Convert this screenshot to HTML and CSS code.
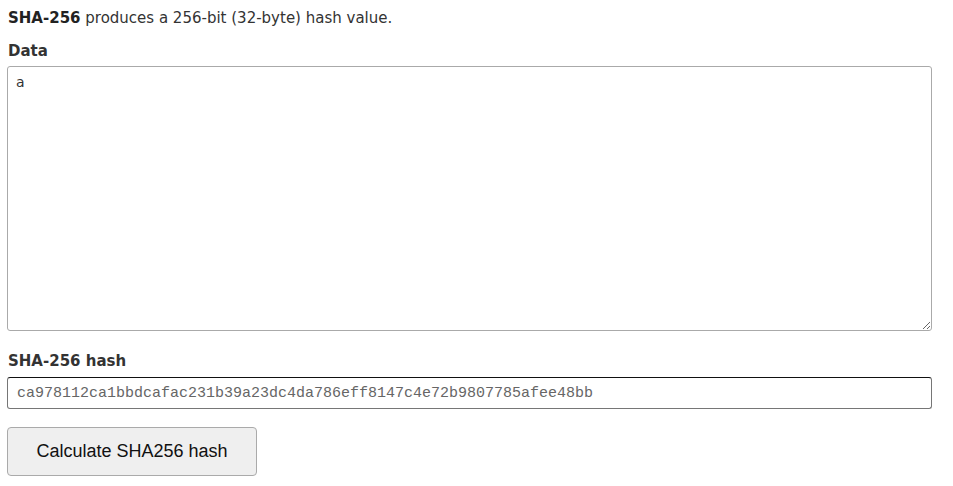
FILE: index.html
```html
<!DOCTYPE html>
<html>
<head>
<meta charset="utf-8">
<link rel="stylesheet" href="styles.css">
</head>
<body>
<div class="page">
  <p class="intro"><b>SHA-256</b> produces a 256-bit (32-byte) hash value.</p>
  <label class="lbl" for="data">Data</label>
  <textarea id="data" class="data">a</textarea>
  <label class="lbl lbl-hash" for="hash">SHA-256 hash</label>
  <input id="hash" class="hash" type="text" value="ca978112ca1bbdcafac231b39a23dc4da786eff8147c4e72b9807785afee48bb">
  <button class="btn">Calculate SHA256 hash</button>
</div>
</body>
</html>
```
FILE: styles.css
```css
html, body { margin: 0; padding: 0; background: #fff; }
.page {
  padding: 8px 21px 0 7px;
  font-family: "DejaVu Sans", Verdana, sans-serif;
  font-size: 15px;
  color: #333;
  display: flex;
  flex-direction: column;
  align-items: flex-start;
}
.intro { margin: 0 0 0 1px; line-height: 20px; }
.intro b { color: #222; }
.lbl {
  display: block;
  font-weight: bold;
  margin: 13px 0 0 1px;
  line-height: 20px;
  color: #333;
}
.data {
  box-sizing: border-box;
  width: 925px;
  height: 265px;
  margin: 5px 0 0 0;
  border: 1px solid #aaa;
  border-radius: 3px;
  padding: 7px 8px;
  font-family: "DejaVu Sans", Verdana, sans-serif;
  font-size: 14px;
  color: #333;
  resize: vertical;
  outline: none;
}
.lbl-hash { margin-top: 20px; }
.hash {
  box-sizing: border-box;
  width: 925px;
  height: 32px;
  margin: 6px 0 0 0;
  border: 1px solid #767676;
  border-top-color: #111;
  border-radius: 3px;
  padding: 0 9px;
  font-family: "Liberation Mono", "Courier New", monospace;
  font-size: 15px;
  color: #666;
  outline: none;
}
.btn {
  box-sizing: border-box;
  width: 250px;
  height: 49px;
  margin-top: 18px;
  background: #efefef;
  border: 1px solid #aaa;
  border-radius: 4px;
  font-family: "Liberation Sans", Arial, sans-serif;
  font-size: 18px;
  color: #111;
}
```
